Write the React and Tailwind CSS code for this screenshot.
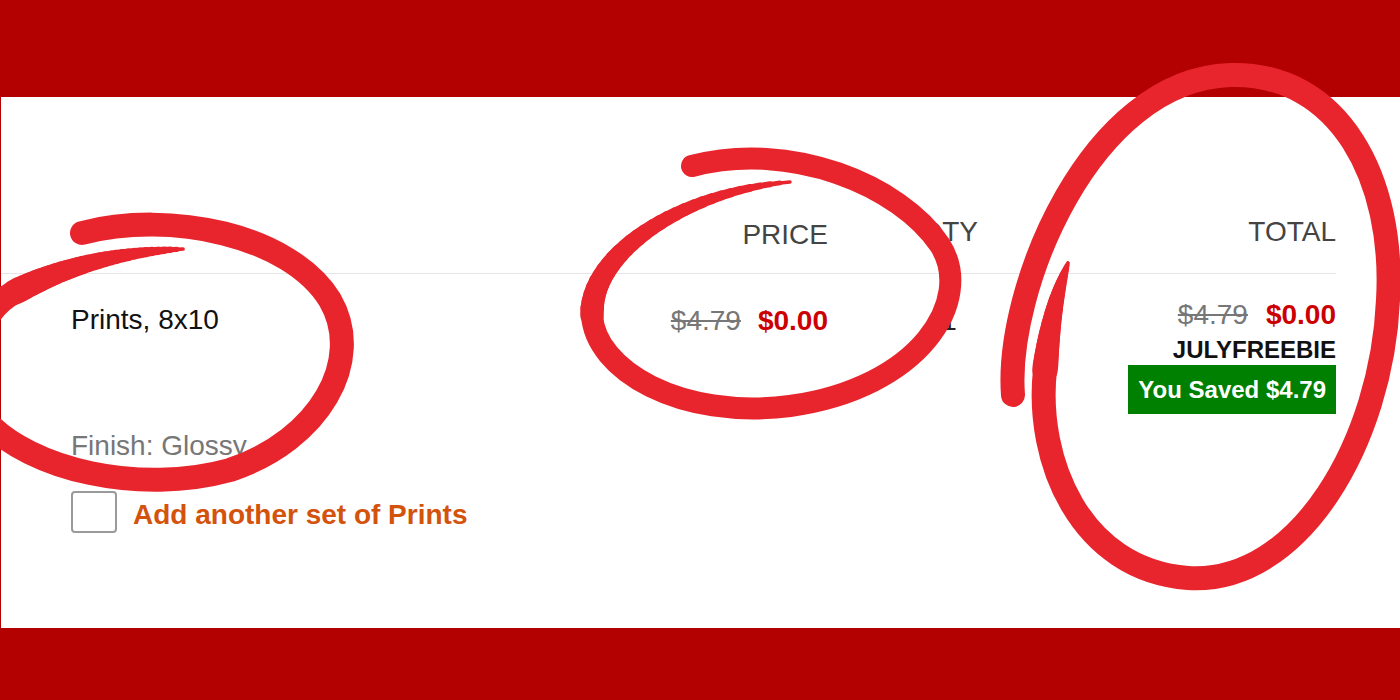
const MARK_RED = '#e8252d';

// hand-drawn circles: each is a run of cubic segments, the last one tapers off
const MARKS = [
  {
    w: 24,
    segs: [
      [82, 233, 170, 210, 290, 235, 330, 300],
      [330, 300, 365, 360, 320, 440, 230, 470],
      [230, 470, 140, 495, 30, 470, -15, 420],
      [-15, 420, -45, 380, -25, 312, 15, 292],
      [15, 292, 65, 266, 120, 252, 183, 249],
    ],
  },
  {
    w: 22,
    segs: [
      [692, 166, 790, 140, 900, 185, 940, 245],
      [940, 245, 975, 300, 920, 388, 790, 406],
      [790, 406, 680, 420, 595, 370, 592, 315],
      [592, 315, 590, 250, 690, 190, 790, 182],
    ],
  },
  {
    w: 24,
    segs: [
      [1013, 395, 1005, 290, 1090, 80, 1230, 75],
      [1230, 75, 1340, 72, 1395, 180, 1388, 300],
      [1388, 300, 1382, 440, 1300, 585, 1188, 578],
      [1188, 578, 1080, 570, 1035, 460, 1045, 370],
      [1045, 370, 1050, 320, 1058, 290, 1068, 263],
    ],
  },
];

const pointAt = (s, t) => {
  const u = 1 - t;
  const a = u * u * u, b = 3 * u * u * t, c = 3 * u * t * t, d = t * t * t;
  return [a * s[0] + b * s[2] + c * s[4] + d * s[6], a * s[1] + b * s[3] + c * s[5] + d * s[7]];
};

function Mark({ w, segs }) {
  const body = segs.slice(0, -1);
  const tail = segs[segs.length - 1];
  const d = body
    .map((s, i) => `${i === 0 ? `M ${s[0]} ${s[1]} ` : ''}C ${s[2]} ${s[3]} ${s[4]} ${s[5]} ${s[6]} ${s[7]}`)
    .join(' ');
  const n = 30;
  const pieces = [];
  for (let i = 0; i < n; i++) {
    const [x1, y1] = pointAt(tail, i / n);
    const [x2, y2] = pointAt(tail, (i + 1) / n);
    const sw = w * Math.pow(1 - i / n, 0.7) + 1.5;
    pieces.push(<line key={i} x1={x1} y1={y1} x2={x2} y2={y2} strokeWidth={sw} />);
  }
  return (
    <g stroke={MARK_RED} fill="none" strokeLinecap="round" strokeLinejoin="round">
      <path d={d} strokeWidth={w} />
      {pieces}
    </g>
  );
}

export default function App() {
  return (
    <div className="relative h-[700px] w-[1400px] overflow-hidden bg-white font-['Liberation_Sans',Arial,sans-serif]">
      <div className="h-[97px] bg-[#b30000]" />

      <main className="h-[531px] border-l border-[#b30000] pr-[64px]">
        {/* column headers */}
        <div className="flex items-start border-b border-[#e6e6e6] pt-[119px] pb-[22px] text-[28px] leading-[32px] text-[#444]">
          <div className="flex-1" />
          <div className="mt-[3px] w-[228px] text-right">PRICE</div>
          <div className="w-[150px] text-right">QTY</div>
          <div className="w-[358px] text-right">TOTAL</div>
        </div>

        {/* line item */}
        <div className="flex items-start">
          <div className="flex-1 pl-[70px] pt-[30px]">
            <p className="text-[28px] leading-[32px] text-[#111]">Prints, 8x10</p>
            <p className="mt-[94px] text-[28px] leading-[32px] text-[#777]">Finish: Glossy</p>
            <label className="mt-[29px] flex items-start gap-[16px]">
              <span className="h-[42px] w-[46px] rounded-[4px] border-2 border-[#9a9a9a] bg-white" />
              <span className="mt-[8px] text-[28px] font-bold leading-[32px] text-[#d4530c]">
                Add another set of Prints
              </span>
            </label>
          </div>

          <div className="flex w-[228px] justify-end gap-[17px] pt-[31px] text-[28px] leading-[32px]">
            <span className="text-[#777] line-through decoration-[#777]">$4.79</span>
            <span className="font-bold text-[#cc0000]">$0.00</span>
          </div>

          <div className="flex w-[150px] justify-end pt-[31px] text-[28px] leading-[32px] text-[#222]">
            <span className="w-[58px] text-center">1</span>
          </div>

          <div className="flex w-[358px] flex-col items-end pt-[25px]">
            <div className="flex gap-[18px] text-[28px] leading-[32px]">
              <span className="text-[#777] line-through decoration-[#777]">$4.79</span>
              <span className="font-bold text-[#cc0000]">$0.00</span>
            </div>
            <div className="mt-[5px] text-[24px] font-bold leading-[28px] text-[#111]">JULYFREEBIE</div>
            <div className="mt-[1px] bg-[#008000] px-[10px] text-[24px] font-bold leading-[49px] text-white">
              You Saved $4.79
            </div>
          </div>
        </div>
      </main>

      <div className="h-[72px] bg-[#b30000]" />

      <svg className="pointer-events-none absolute inset-0" width="1400" height="700" viewBox="0 0 1400 700">
        {MARKS.map((m, i) => (
          <Mark key={i} {...m} />
        ))}
      </svg>
    </div>
  );
}
